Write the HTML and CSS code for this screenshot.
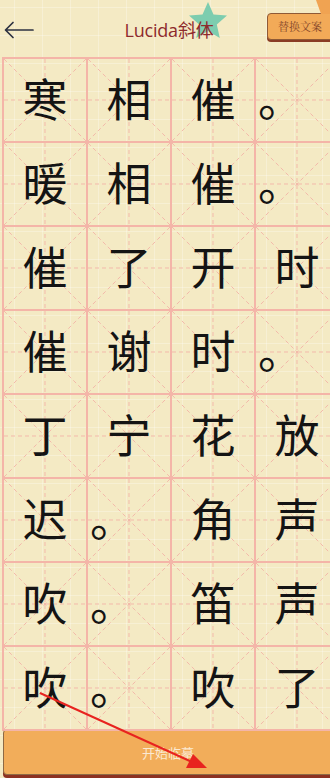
FILE: index.html
```html
<!DOCTYPE html>
<html lang="zh">
<head>
<meta charset="utf-8">
<link rel="stylesheet" href="styles.css">
</head>
<body>
<div class="page">
  <header class="header">
    <div class="back">
      <svg width="30" height="18" viewBox="0 0 30 18"><path d="M29 9H2M9 1.5L1.5 9L9 16.5" fill="none" stroke="#2c3242" stroke-width="1.7" stroke-linecap="round" stroke-linejoin="round"/></svg>
    </div>
    <div class="title-wrap">
      <svg class="star" width="40" height="38" viewBox="0 0 40 38"><path d="M20 0L25.5 12.5L39 13.6L28.8 22.6L31.8 36L20 29L8.2 36L11.2 22.6L1 13.6L14.5 12.5Z" fill="#7dcdaf"/></svg>
      <span class="title">Lucida斜体</span>
    </div>
    <div class="swap-wrap">
      <button class="swap">替换文案</button>
    </div>
  </header>
  <svg class="corner" width="18" height="14" viewBox="0 0 18 14"><path d="M0 0H18V14H5Z" fill="#f0a352"/></svg>
  <main class="grid">
    <div class="cell">寒</div><div class="cell">相</div><div class="cell">催</div><div class="cell punct">。</div>
    <div class="cell">暖</div><div class="cell">相</div><div class="cell">催</div><div class="cell punct">。</div>
    <div class="cell">催</div><div class="cell">了</div><div class="cell">开</div><div class="cell">时</div>
    <div class="cell">催</div><div class="cell">谢</div><div class="cell">时</div><div class="cell punct">。</div>
    <div class="cell">丁</div><div class="cell">宁</div><div class="cell">花</div><div class="cell">放</div>
    <div class="cell">迟</div><div class="cell punct">。</div><div class="cell">角</div><div class="cell">声</div>
    <div class="cell">吹</div><div class="cell punct">。</div><div class="cell">笛</div><div class="cell">声</div>
    <div class="cell">吹</div><div class="cell punct">。</div><div class="cell">吹</div><div class="cell">了</div>
  </main>
  <footer class="footer">
    <button class="start">开始临摹</button>
  </footer>
  <svg class="annot" width="330" height="778" viewBox="0 0 330 778">
    <line x1="40" y1="693" x2="192" y2="762" stroke="#e8231f" stroke-width="2"/>
    <path d="M207 768L186 768L193 754Z" fill="#e8231f"/>
  </svg>
</div>
</body>
</html>
```
FILE: styles.css
```css
* { box-sizing: border-box; }
html, body { margin: 0; padding: 0; }
body {
  width: 330px;
  height: 778px;
  overflow: hidden;
  background-color: #f4eac4;
  background-image:
    repeating-linear-gradient(90deg, transparent 0, transparent 14px, rgba(255,255,255,0.28) 14px, rgba(255,255,255,0.28) 15px, transparent 15px, transparent 28px),
    repeating-linear-gradient(0deg, transparent 0, transparent 14px, rgba(255,255,255,0.28) 14px, rgba(255,255,255,0.28) 15px, transparent 15px, transparent 28px);
  font-family: "Noto Sans CJK SC", "Noto Sans", sans-serif;
}
.page {
  position: relative;
  width: 330px;
  height: 778px;
  overflow: hidden;
}
.corner {
  position: absolute;
  right: -4px;
  top: 0;
  z-index: 3;
  display: block;
}
.header {
  position: relative;
  height: 57px;
  display: grid;
  grid-template-columns: 80px 1fr 80px;
  align-items: center;
}
.back {
  padding-left: 4px;
  padding-top: 2px;
  display: flex;
  align-items: center;
}
.title-wrap {
  position: relative;
  display: flex;
  justify-content: center;
  align-items: center;
  padding-left: 8px;
}
.star {
  position: absolute;
  left: 108px;
  top: -14px;
}
.title {
  position: relative;
  color: #8e2a2c;
  font-family: "Open Sans", "Noto Sans CJK SC", sans-serif;
  font-size: 18px;
  letter-spacing: -0.2px;
}
.swap-wrap {
  height: 57px;
  display: flex;
  align-items: center;
  justify-content: flex-end;
}
.swap {
  position: relative;
  margin-top: -5px;
  margin-right: -12px;
  width: 75px;
  height: 27px;
  background: #f2aa58;
  border: 1px solid #8f5a36;
  border-radius: 4px;
  box-shadow: 0 2px 0 #8a3c25;
  color: #84462a;
  font-family: "Noto Serif CJK SC", "Liberation Serif", "Noto Sans CJK SC", serif;
  font-size: 11px;
  padding: 0 0 0 10px;
  text-align: left;
}
.grid {
  margin-left: 2px;
  display: grid;
  grid-template-columns: repeat(4, 84px);
  grid-auto-rows: 84px;
  width: 338px;
  border-top: 2px solid #f4b5a8;
  border-left: 2px solid #f4b5a8;
}
.cell {
  border-right: 2px solid #f4b5a8;
  border-bottom: 2px solid #f4b5a8;
  background-image: url("data:image/svg+xml,%3Csvg xmlns='http://www.w3.org/2000/svg' width='82' height='82'%3E%3Cg stroke='%23f3b9aa' stroke-width='1' stroke-dasharray='4 3' fill='none'%3E%3Cpath d='M0 41H82M41 0V82M0 0L82 82M82 0L0 82'/%3E%3C/g%3E%3C/svg%3E");
  display: flex;
  align-items: center;
  justify-content: center;
  font-size: 45px;
  line-height: 1;
  color: #141414;
  padding-bottom: 6px;
}
.cell.punct {
  justify-content: flex-start;
  padding-left: 2px;
}
.footer {
  margin-top: -2px;
  padding-left: 3px;
}
.start {
  display: block;
  width: 340px;
  height: 46px;
  background: #f2ad5a;
  border: 1px solid #8e6a44;
  border-radius: 4px;
  box-shadow: 0 3px 0 #8d3222;
  color: #fbe9d2;
  font-family: "Noto Sans CJK SC", sans-serif;
  font-size: 13px;
  padding: 0 10px 0 0;
  text-align: center;
}
.annot {
  position: absolute;
  left: 0;
  top: 0;
  pointer-events: none;
}
```
